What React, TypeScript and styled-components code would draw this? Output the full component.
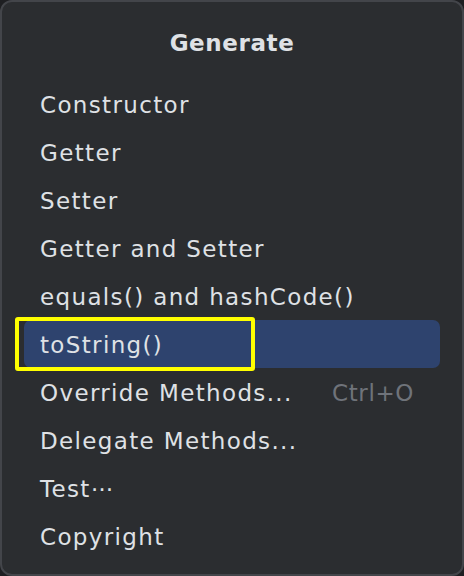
import React from "react";
import styled, { createGlobalStyle } from "styled-components";

const items: { label: string; shortcut?: string }[] = [
  { label: "Constructor" },
  { label: "Getter" },
  { label: "Setter" },
  { label: "Getter and Setter" },
  { label: "equals() and hashCode()" },
  { label: "toString()" },
  { label: "Override Methods...", shortcut: "Ctrl+O" },
  { label: "Delegate Methods..." },
  { label: "Test\u22ef" },
  { label: "Copyright" },
];

const SELECTED = 5;

export default function App() {
  return (
    <>
      <GlobalStyle />
      <Popup>
        <Title>Generate</Title>
        <List>
          {items.map((item, idx) => (
            <Row key={item.label} selected={idx === SELECTED}>
              <Label>{item.label}</Label>
              {item.shortcut && <Shortcut>{item.shortcut}</Shortcut>}
              {idx === SELECTED && <Marker />}
            </Row>
          ))}
        </List>
      </Popup>
    </>
  );
}

const GlobalStyle = createGlobalStyle`
  html, body {
    margin: 0;
    padding: 0;
    background: #1e1f22;
  }
  body {
    font-family: "DejaVu Sans", "Noto Sans", sans-serif;
  }
`;

const Popup = styled.div`
  box-sizing: border-box;
  width: 464px;
  height: 576px;
  background-color: #2b2d30;
  border: 2px solid #43454a;
  border-radius: 12px;
  display: flex;
  flex-direction: column;
`;

const Title = styled.div`
  height: 78px;
  display: flex;
  align-items: center;
  justify-content: center;
  color: #dfe1e5;
  font-size: 23px;
  font-weight: 600;
  letter-spacing: 0.6px;
  padding-top: 3px;
  box-sizing: border-box;
`;

const List = styled.div`
  display: flex;
  flex-direction: column;
  margin: 0 22px;
`;

const Row = styled.div<{ selected: boolean }>`
  position: relative;
  height: 48px;
  display: flex;
  align-items: center;
  justify-content: space-between;
  padding: 2px 26px 0 16px;
  box-sizing: border-box;
  border-radius: 7px;
  background-color: ${(p) => (p.selected ? "#2e436e" : "transparent")};
`;

const Label = styled.span`
  color: #dfe1e5;
  font-size: 23px;
  letter-spacing: 1.35px;
  white-space: nowrap;
`;

const Shortcut = styled.span`
  color: #6f737a;
  font-size: 23px;
  letter-spacing: 0.6px;
`;

const Marker = styled.div`
  position: absolute;
  left: -9px;
  top: -3px;
  width: 240px;
  height: 54px;
  box-sizing: border-box;
  border: 4px solid #ffff00;
  border-radius: 3px;
  pointer-events: none;
`;
